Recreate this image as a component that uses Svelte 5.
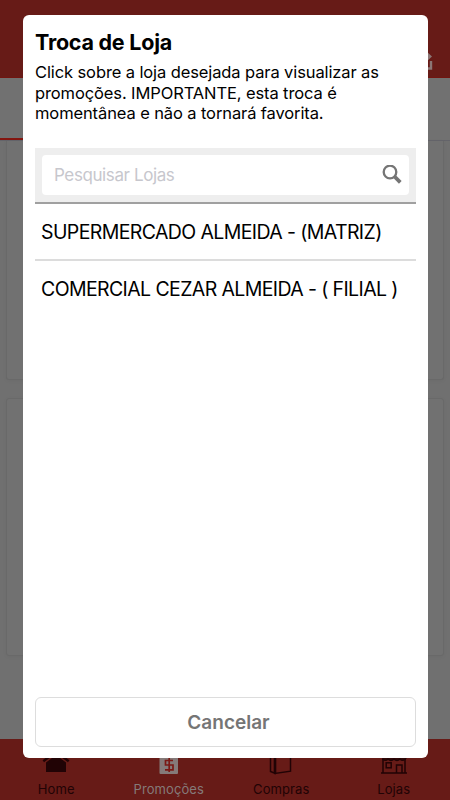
<script lang="ts">
  interface Store {
    id: number;
    name: string;
  }

  const stores: Store[] = [
    { id: 1, name: 'SUPERMERCADO ALMEIDA - (MATRIZ)' },
    { id: 2, name: 'COMERCIAL CEZAR ALMEIDA - ( FILIAL )' },
  ];

  const tabs = [
    { icon: 'home', label: 'Home' },
    { icon: 'promo', label: 'Promoções' },
    { icon: 'book', label: 'Compras' },
    { icon: 'store', label: 'Lojas' },
  ];

  let search = $state('');
  let activeTab = $state('promo');
  let open = $state(true);

  let filtered = $derived(
    stores.filter((s) => s.name.toLowerCase().includes(search.toLowerCase()))
  );
</script>

<div class="screen">
  <header class="topbar">
    <svg class="share" width="22" height="22" viewBox="0 0 22 22" fill="none" stroke="#8b7675" stroke-width="2.4">
      <path d="M8 4H3v15.5h17V12" />
      <path d="M5 15c1-6 4-9 9-9V1l7 6.5-7 6.5v-4c-4 0-7 1-9 5z" fill="#8b7675" stroke="none" />
    </svg>
  </header>
  <div class="subbar"><div class="active-line"></div></div>
  <main class="cards">
    <div class="card first"></div>
    <div class="card"></div>
  </main>
  <nav class="tabbar">
    {#each tabs as tab}
      <button class="tab" class:active={tab.icon === activeTab} onclick={() => (activeTab = tab.icon)}>
        <svg width="28" height="28" viewBox="0 0 28 28" fill="none" stroke="currentColor" stroke-width="1.5">
          {#if tab.icon === 'home'}
            <path d="M14 8l10 7.5V25H4v-9.5z" fill="currentColor" stroke="none" />
            <path d="M1.3 14.2L14 4.5l12.7 9.7" stroke-width="2.4" />
          {:else if tab.icon === 'promo'}
            <rect x="4.5" y="3" width="18.5" height="24" rx="1" fill="currentColor" stroke="none" />
            <path d="M18 13.5h-7.5V18H18v4.8h-8M14.2 9v16" stroke="#7b1914" stroke-width="1.7" />
          {:else if tab.icon === 'book'}
            <path d="M3.5 5v19.5L8 26.3V6z" />
            <path d="M8 6v20.5l15.5-2.3V5z" />
            <path d="M8 5v21" stroke-width="2.6" />
          {:else}
            <path d="M1 26h26M3 12v14M25 12v14M2 12h24M5 4h18l3 8" />
            <path d="M3 12c2 2 3 2 5 0 2 2 4 2 6 0 2 2 4 2 6 0 2 2 3 2 5 0" />
            <rect x="6.2" y="15.8" width="5" height="5" />
            <path d="M16.5 26v-8H22v8" />
          {/if}
        </svg>
        <span>{tab.label}</span>
      </button>
    {/each}
  </nav>

  {#if open}
    <div class="modal" role="dialog" aria-label="Troca de Loja">
      <h1>Troca de Loja</h1>
      <p class="info">
        <span>Click sobre a loja desejada para visualizar as</span>
        <span>promoções. IMPORTANTE, esta troca é</span>
        <span>momentânea e não a tornará favorita.</span>
      </p>
      <div class="search">
        <div class="field">
          <input type="text" placeholder="Pesquisar Lojas" bind:value={search} />
          <svg width="20" height="20" viewBox="0 0 20 20" fill="none" stroke="#757575">
            <circle cx="8" cy="7" r="6.3" stroke-width="2.3" />
            <path d="M12.5 11.5l5.8 5.8" stroke-width="3.8" />
          </svg>
        </div>
      </div>
      <ul class="list">
        {#each filtered as store (store.id)}
          <li>{store.name}</li>
        {/each}
      </ul>
      <button class="cancel" onclick={() => (open = false)}>Cancelar</button>
    </div>
  {/if}
</div>

<style>
  :global(body) {
    margin: 0;
    background: #707070;
  }

  .screen {
    position: relative;
    display: flex;
    flex-direction: column;
    height: 800px;
    overflow: hidden;
    background: #707070;
    font-family: Inter, 'Liberation Sans', sans-serif;
  }

  .topbar {
    display: flex;
    justify-content: flex-end;
    align-items: flex-end;
    box-sizing: border-box;
    height: 78px;
    padding: 0 17px 6px 0;
    background: #671b17;
    border-bottom: 1px solid #721510;
  }

  .subbar {
    box-sizing: border-box;
    display: flex;
    align-items: flex-end;
    height: 63px;
    background: #717171;
    border-bottom: 1px solid #64646a;
  }

  .active-line {
    width: 113px;
    height: 2px;
    background: #84150f;
  }

  .cards {
    flex: 1;
    display: flex;
    flex-direction: column;
    gap: 18px;
    padding: 0 6px;
  }

  .card {
    height: 256px;
    border: 1px solid #696969;
    border-radius: 3px;
    background: #717171;
    box-shadow: 0 1px 4px rgba(0, 0, 0, 0.04);
  }

  .card.first {
    height: 238px;
    border-top: 0;
    border-radius: 0 0 3px 3px;
  }

  .tabbar {
    display: flex;
    height: 61px;
    background: #671b17;
  }

  .tab {
    flex: 1;
    display: flex;
    flex-direction: column;
    align-items: center;
    padding: 8px 0 0;
    border: 0;
    background: none;
    color: #210305;
    font: 400 13px Inter, 'Liberation Sans', sans-serif;
    letter-spacing: 0.1px;
  }

  .tab span {
    line-height: 16px;
    margin-top: 6px;
  }

  .tab.active {
    color: #857a79;
  }

  .modal {
    position: absolute;
    top: 15px;
    left: 23px;
    box-sizing: border-box;
    width: 405px;
    height: 743px;
    padding: 13px 12px 11px;
    display: flex;
    flex-direction: column;
    border-radius: 6px;
    background: #fff;
    color: #000;
  }

  h1 {
    margin: 0;
    font-size: 21.5px;
    font-weight: 700;
    line-height: 28px;
    letter-spacing: -0.24px;
  }

  .info {
    margin: 6px 0 0;
    font-size: 16.5px;
    line-height: 20.7px;
    letter-spacing: -0.11px;
    white-space: nowrap;
  }

  .info span {
    display: block;
  }

  .search {
    margin-top: 24px;
    padding: 7px;
    background: #eee;
    border-bottom: 2px solid #a0a0a0;
  }

  .field {
    display: flex;
    align-items: center;
    height: 40px;
    padding: 0 7px 0 12px;
    border-radius: 4px;
    background: #fff;
  }

  input {
    flex: 1;
    min-width: 0;
    padding: 0;
    border: 0;
    outline: 0;
    background: none;
    font: 400 17px Inter, 'Liberation Sans', sans-serif;
    letter-spacing: -0.4px;
  }

  input::placeholder {
    color: #c7c7cd;
  }

  .list {
    flex: 1;
    margin: 0;
    padding: 0;
    list-style: none;
  }

  .list li {
    height: 55px;
    padding-left: 6px;
    font-size: 19.5px;
    line-height: 57px;
    letter-spacing: -0.61px;
    white-space: nowrap;
  }

  .list li + li {
    border-top: 2px solid #dcdcdc;
  }

  .cancel {
    height: 50px;
    padding: 0 0 0 6px;
    border: 1px solid #ddd;
    border-radius: 6px;
    background: #fff;
    color: #757575;
    font: 600 19px Inter, 'Liberation Sans', sans-serif;
  }
</style>
